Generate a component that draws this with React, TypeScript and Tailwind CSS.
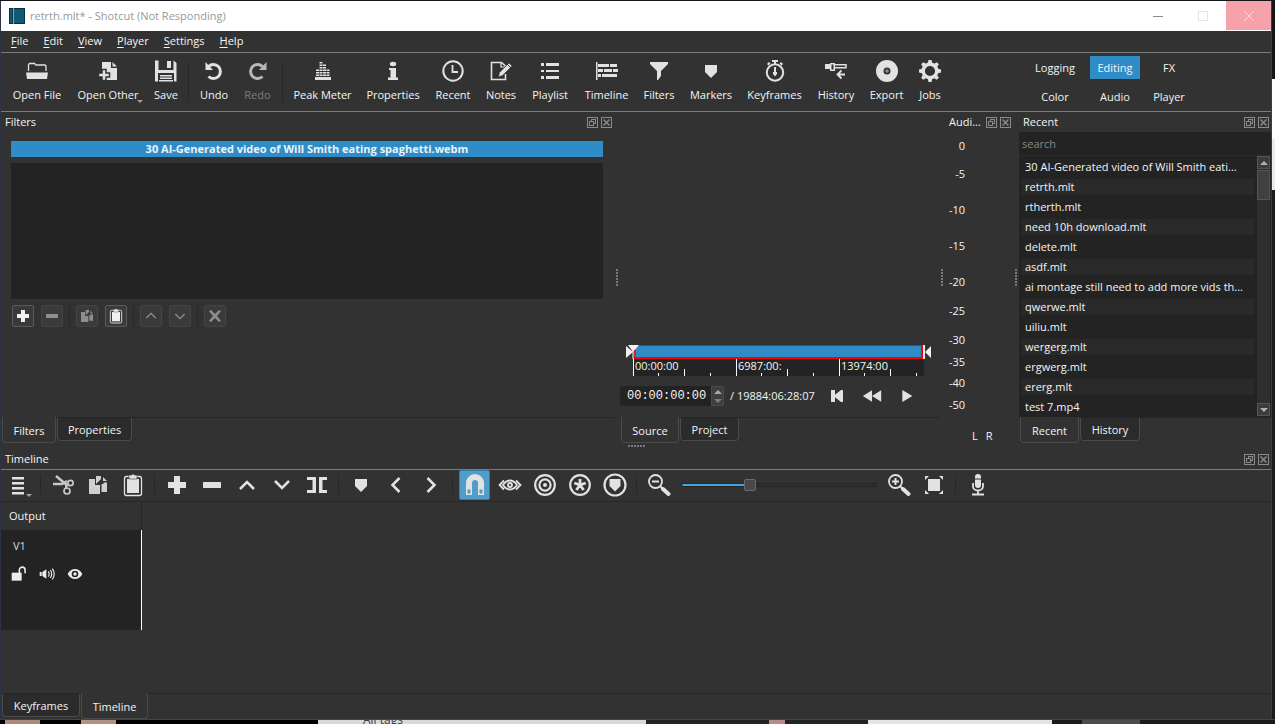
import React, { useState } from "react";

type IconProps = { children: React.ReactNode; size?: string };

const Icon = ({ children, size = "h-6 w-6" }: IconProps) => (
    <svg viewBox="0 0 24 24" className={`${size} shrink-0`} fill="currentColor" stroke="none" aria-hidden="true">
        {children}
    </svg>
);

/* ---------- shared icon shapes ---------- */

const plus = <path d="M9 3h6v6h6v6h-6v6H9v-6H3V9h6z" />;
const minus = <rect x="3" y="9" width="18" height="6" rx="0.5" />;
const marker = <path d="M6 6h12v7l-6 6-6-6z" />;
const copy = (
    <>
        <path d="M3 6h6v6h5v9H3z" />
        <path d="M10 3h5v3l-5 5z" />
        <path d="M15.500 11h2V9.500H21V19h-5.500z" />
        <path d="M17 4l4 4h-4z" />
    </>
);
const paste = (
    <>
        <rect x="3.500" y="3.500" width="17" height="19" rx="2" fill="none" stroke="currentColor" strokeWidth="1.300" />
        <path d="M6 6h12v14H6z" />
        <path d="M8 2h3V1h2v1h3v4H8z" stroke="#323232" strokeWidth="0.600" />
    </>
);
const up = <path d="M5 16l7-7 7 7" fill="none" stroke="currentColor" strokeWidth="2.500" />;
const down = <path d="M5 8l7 7 7-7" fill="none" stroke="currentColor" strokeWidth="2.500" />;

/* ---------- main toolbar ---------- */

type Tool = { label: string; width: string; icon: React.ReactNode; disabled?: boolean; arrow?: boolean };

const fileTools: Tool[] = [
    {
        label: "Open File",
        width: "w-16",
        icon: (
            <>
                <path d="M3.500 12V6l1-1.500h5L11 6h9l1 1v5" fill="none" stroke="currentColor" strokeWidth="1.300" />
                <path d="M1 13.500h22l-1 6.500H2z" />
            </>
        ),
    },
    {
        label: "Open Other",
        width: "w-[78px]",
        arrow: true,
        icon: (
            <>
                <path d="M6 3h9v6h6v12H6z" />
                <path d="M16.500 3v4.500H21z" />
                <path d="M6 10.500h4V14h3.500v4H10v3.500H6V18H2.500v-4H6z" stroke="#323232" strokeWidth="1.500" />
            </>
        ),
    },
    {
        label: "Save",
        width: "w-[38px]",
        icon: (
            <>
                <path d="M1 1.500h3.500V11h15V1.500l3 2.500v18.500H20V14H4v8.500H1z" />
                <path d="M13 2h4v7h-4z" />
                <path d="M6 16h12v1.500H6zM6 18.500h12V20H6zM5 21h14v1.500H5z" />
            </>
        ),
    },
];

const editTools: Tool[] = [
    {
        label: "Undo",
        width: "w-11",
        icon: (
            <>
                <path d="M6.500 7.500A7 7 0 1 1 6.500 17.500" fill="none" stroke="currentColor" strokeWidth="3" />
                <path d="M3.500 3v8H11z" />
            </>
        ),
    },
    {
        label: "Redo",
        width: "w-[43px]",
        disabled: true,
        icon: (
            <>
                <path d="M16.500 7.500A7 7 0 1 0 16.500 17.500" fill="none" stroke="#b8b8b8" strokeWidth="3" />
                <path d="M20.500 3v8H13z" fill="#b8b8b8" />
            </>
        ),
    },
];

const meterBars = [
    [5, 3],
    [8.5, 6],
    [12, 5],
    [15.5, 3],
];

const panelTools: Tool[] = [
    {
        label: "Peak Meter",
        width: "w-[73px]",
        icon: (
            <>
                <rect x="4" y="18" width="16" height="3" />
                {meterBars.map(([x, n]) =>
                    Array.from({ length: n }, (_, i) => <rect key={`${x}-${i}`} x={x} y={15.5 - i * 2.5} width="3" height="1.500" />),
                )}
            </>
        ),
    },
    {
        label: "Properties",
        width: "w-[68px]",
        icon: (
            <>
                <ellipse cx="12" cy="5" rx="3.200" ry="2.200" />
                <path d="M8 9h7v9.500h2V21H7v-2.500h2.500V11H8z" />
            </>
        ),
    },
    {
        label: "Recent",
        width: "w-[52px]",
        icon: (
            <>
                <circle cx="12" cy="12" r="9.700" fill="none" stroke="currentColor" strokeWidth="2" />
                <path d="M11.500 6v7H17" fill="none" stroke="currentColor" strokeWidth="1.800" />
            </>
        ),
    },
    {
        label: "Notes",
        width: "w-11",
        icon: (
            <>
                <path d="M16.500 7L12.500 3.500H2.500v17h14V15" fill="none" stroke="currentColor" strokeWidth="1.600" />
                <path d="M12 4v4h4" fill="none" stroke="currentColor" strokeWidth="1.200" />
                <path d="M20 4l3 3-9.500 9.500L9.500 18l1-4.500z" stroke="#323232" strokeWidth="0.600" />
                <path d="M18 5l4 4" stroke="#323232" strokeWidth="1" />
            </>
        ),
    },
    { label: "Playlist", width: "w-[54px]", icon: <path d="M3 4h3v3H3zM8 4h13v3H8zM3 11h3v2H3zM8 11h13v2H8zM3 17h3v3H3zM8 17h13v3H8z" /> },
    {
        label: "Timeline",
        width: "w-[59px]",
        icon: <path d="M1 3h1.500v18H1zM3 5h11v3H3zM15 5h7v3h-7zM3 10h5v3H3zM9 10h8v3H9zM18 10h5v3h-5zM3 15h3v3H3zM7 15h15v3H7z" />,
    },
    { label: "Filters", width: "w-[46px]", icon: <path d="M3 3h18v2l-7 7v5l-3 4h-1v-9L3 5z" /> },
    { label: "Markers", width: "w-[58px]", icon: marker },
    {
        label: "Keyframes",
        width: "w-[69px]",
        icon: (
            <>
                <circle cx="12" cy="13.500" r="8.200" fill="none" stroke="currentColor" strokeWidth="2" />
                <path d="M9 1h6v2h-2v3h-2V3H9zM4 5l2-2 1.500 1.500-2 2zM20 5l-2-2-1.500 1.500 2 2z" />
                <path d="M11 8h2v5h1v2l-2 2.500-2-2.500v-2h1z" />
            </>
        ),
    },
    {
        label: "History",
        width: "w-[54px]",
        icon: (
            <>
                <path d="M1 5h5v5H1zM6 4h5v8H6z" />
                <path d="M7.500 5.500h2v5h-2z" fill="#323232" />
                <path d="M11 5.700h11v3H11" fill="none" stroke="currentColor" strokeWidth="1.500" />
                <path d="M21 15.500h-7M17.500 11.500l-4 4 4 4" fill="none" stroke="currentColor" strokeWidth="1.800" />
            </>
        ),
    },
    {
        label: "Export",
        width: "w-[47px]",
        icon: (
            <>
                <circle cx="12" cy="12" r="11" />
                <circle cx="12" cy="12" r="3.500" fill="#323232" />
                <circle cx="12" cy="12" r="1.800" fill="#8a8a8a" />
            </>
        ),
    },
    {
        label: "Jobs",
        width: "w-10",
        icon: (
            <>
                <circle cx="12" cy="12" r="6.800" fill="none" stroke="currentColor" strokeWidth="3.400" />
                {[0, 45, 90, 135, 180, 225, 270, 315].map((a) => (
                    <path key={a} d="M9.800 4l.7-3h3l.7 3z" transform={`rotate(${a} 12 12)`} />
                ))}
            </>
        ),
    },
];

const ToolButton = ({ tool }: { tool: Tool }) => (
    <button disabled={tool.disabled} className={`relative flex shrink-0 flex-col items-center gap-1 whitespace-nowrap ${tool.width}`}>
        <span className="text-[#e2e2e2]">
            <Icon>{tool.icon}</Icon>
        </span>
        <span className={`leading-4 ${tool.disabled ? "text-[#7d7d7d]" : ""}`}>{tool.label}</span>
        {tool.arrow && <span className="absolute right-1 bottom-0 border-x-3 border-t-3 border-x-transparent border-t-[#a0a0a0]" />}
    </button>
);

const ToolSeparator = () => <span className="mx-[3px] mt-[3px] h-10 w-px shrink-0 bg-[#282828]" />;

const layouts = ["Logging", "Editing", "FX", "Color", "Audio", "Player"];

const MainToolbar = () => {
    const [layout, setLayout] = useState("Editing");

    return (
        <div className="flex h-[59px] shrink-0 border-b border-[#7c7c7c] bg-[#323232] pl-1">
            <div className="flex items-start pt-[6px]">
                {fileTools.map((t) => (
                    <ToolButton key={t.label} tool={t} />
                ))}
                <ToolSeparator />
                {editTools.map((t) => (
                    <ToolButton key={t.label} tool={t} />
                ))}
                <ToolSeparator />
                {panelTools.map((t) => (
                    <ToolButton key={t.label} tool={t} />
                ))}
            </div>
            <div className="ml-[74px] grid grid-cols-[62px_50px_50px] content-start gap-x-1 gap-y-[6px] pt-[3px]">
                {layouts.map((name) => (
                    <button key={name} onClick={() => setLayout(name)} className={`h-[23px] ${layout === name ? "bg-[#308cc6]" : ""}`}>
                        {name}
                    </button>
                ))}
            </div>
        </div>
    );
};

/* ---------- dock parts ---------- */

const DockTitle = ({ title }: { title: string }) => (
    <div className="flex h-5 shrink-0 items-center gap-[3px] pr-[2px] pl-1">
        <h2 className="min-w-0 flex-1 whitespace-nowrap">{title}</h2>
        <button aria-label={`Float ${title}`}>
            <svg viewBox="0 0 11 11" className="h-[11px] w-[11px]" fill="none" stroke="#8a8a8a" shapeRendering="crispEdges">
                <rect x="0.500" y="0.500" width="10" height="10" />
                <path d="M4.500 4V2.500h4v4H7M2.500 4.500h4v4h-4z" />
            </svg>
        </button>
        <button aria-label={`Close ${title}`}>
            <svg viewBox="0 0 11 11" className="h-[11px] w-[11px]" fill="none" stroke="#8a8a8a">
                <rect x="0.500" y="0.500" width="10" height="10" />
                <path d="M2.500 2.500l6 6M8.500 2.500l-6 6" strokeWidth="1.500" />
            </svg>
        </button>
    </div>
);

type TabsProps = { tabs: { name: string; width: string }[]; initial: string };

const Tabs = ({ tabs, initial }: TabsProps) => {
    const [active, setActive] = useState(initial);

    return (
        <div role="tablist" className="flex h-[26px] shrink-0 items-start gap-px border-t border-[#262626] pl-px">
            {tabs.map((t) => (
                <button
                    key={t.name}
                    role="tab"
                    aria-selected={active === t.name}
                    onClick={() => setActive(t.name)}
                    className={`rounded-b-sm border-x border-b border-[#4a4a4a] ${t.width} ${active === t.name ? "-mt-px h-[26px] bg-[#323232] pt-[2px]" : "h-[23px] bg-[#2b2b2b] pt-px"}`}
                >
                    {t.name}
                </button>
            ))}
        </div>
    );
};

const SplitterV = () => (
    <div className="flex w-[6px] shrink-0 flex-col items-center justify-center gap-px">
        {[0, 1, 2, 3, 4, 5].map((i) => (
            <span key={i} className="h-[2px] w-[2px] bg-[#7a7a7a]" />
        ))}
    </div>
);

/* ---------- filters ---------- */

const chevronUp = <path d="M5 15l7-7 7 7" fill="none" stroke="currentColor" strokeWidth="2" />;
const chevronDown = <path d="M5 9l7 7 7-7" fill="none" stroke="currentColor" strokeWidth="2" />;

const filterButtons = [
    [
        { label: "Add a filter", icon: plus, on: true },
        { label: "Remove selected filter", icon: minus, on: false },
    ],
    [
        { label: "Copy filters", icon: copy, on: false },
        { label: "Paste filters", icon: paste, on: true },
    ],
    [
        { label: "Move filter up", icon: chevronUp, on: false },
        { label: "Move filter down", icon: chevronDown, on: false },
    ],
    [{ label: "Deselect", icon: <path d="M3 5l3-2 6 6 6-6 3 2-6 7 6 7-3 2-6-6-6 6-3-2 6-7z" />, on: false }],
];

const FiltersDock = () => (
    <section className="flex min-w-0 flex-1 flex-col">
        <DockTitle title="Filters" />
        <div className="mt-[9px] mr-[11px] ml-[10px] h-4 bg-[#308cc6] text-center leading-4 font-bold text-[#eaf3fa]">
            30 AI-Generated video of Will Smith eating spaghetti.webm
        </div>
        <div className="mt-[6px] mr-[11px] ml-[10px] h-[136px] bg-[#232323]" />
        <div className="mt-[6px] ml-[11px] flex">
            {filterButtons.map((group, g) => (
                <div key={g} className="flex items-center gap-[7px]">
                    {g > 0 && <span className="-mr-px ml-[6px] h-5 w-px bg-[#292929]" />}
                    {group.map((b) => (
                        <button
                            key={b.label}
                            aria-label={b.label}
                            disabled={!b.on}
                            className={`flex h-[22px] w-[22px] items-center justify-center rounded-xs border bg-[#3a3a3a] ${b.on ? "border-[#5a5a5a] text-[#f0f0f0]" : "border-[#444444] text-[#8e8e8e]"}`}
                        >
                            <Icon size="h-4 w-4">{b.icon}</Icon>
                        </button>
                    ))}
                </div>
            ))}
        </div>
        <div className="flex-1" />
        <Tabs
            initial="Filters"
            tabs={[
                { name: "Filters", width: "w-[54px]" },
                { name: "Properties", width: "w-[75px]" },
            ]}
        />
    </section>
);

/* ---------- player ---------- */

const PlayerDock = () => {
    const [time, setTime] = useState("00:00:00:00");

    return (
        <section className="flex w-[319px] shrink-0 flex-col">
            <div className="flex-1" />
            <div className="relative mr-[15px] ml-[13px]">
                <div className="h-[14px] border border-r-3 border-b-2 border-[#ff0000] bg-[#308cc6]" />
                <div className="flex h-[17px] overflow-hidden bg-[#232323] leading-[13px]">
                    {["00:00:00", "6987:00:", "13974:00"].map((t) => (
                        <div key={t} className="relative w-[103px] shrink-0 border-l border-white pl-px">
                            {t}
                            <svg viewBox="0 0 103 17" className="absolute top-0 left-0 h-[17px] w-[103px]" stroke="white" shapeRendering="crispEdges">
                                <path d="M24.500 14v3M50.500 10v7M76.500 14v3" />
                            </svg>
                        </div>
                    ))}
                </div>
                <svg viewBox="0 0 13 14" className="absolute top-0 -left-[7px] h-[14px] w-[13px]" fill="#f0f0f0">
                    <path d="M0 1l7 6-7 6z" />
                    <path d="M2 0h11L7 7z" />
                    <path d="M7 6v8" stroke="white" />
                    <path d="M9 5v9" stroke="#ff0000" strokeWidth="1.500" />
                </svg>
                <svg viewBox="0 0 9 14" className="absolute top-0 -right-2 h-[14px] w-[9px]" fill="#f0f0f0">
                    <path d="M0 0h2v14H0zM8 1v12L2 7z" />
                </svg>
            </div>
            <div className="mt-[10px] mb-[11px] flex h-5 items-center">
                <div className="flex h-5 w-[104px] shrink-0 overflow-hidden rounded-xs bg-[#232323]">
                    <input
                        aria-label="Current position"
                        value={time}
                        onChange={(e) => setTime(e.target.value)}
                        className="w-[91px] bg-transparent pl-[7px] font-['Liberation_Mono',monospace] text-[12px] outline-none"
                    />
                    <div className="flex w-[13px] flex-col border border-[#4a4a4a] bg-[#3e3e3e]">
                        <button aria-label="Step forward" className="flex flex-1 items-center justify-center">
                            <span className="border-x-4 border-b-4 border-x-transparent border-b-[#a8a8a8]" />
                        </button>
                        <button aria-label="Step back" className="flex flex-1 items-center justify-center">
                            <span className="border-x-4 border-t-4 border-x-transparent border-t-[#7d7d7d]" />
                        </button>
                    </div>
                </div>
                <span className="w-24 shrink-0 pl-[6px] whitespace-nowrap">/ 19884:06:28:07</span>
                <button aria-label="Skip previous" className="flex w-[34px] justify-center text-[#e2e2e2]">
                    <Icon size="h-4 w-4">
                        <path d="M3 3h6v7l9-7h3v18h-3l-9-7v7H3z" />
                    </Icon>
                </button>
                <button aria-label="Rewind" className="flex w-[35px] justify-center text-[#e2e2e2]">
                    <Icon size="h-5 w-5">
                        <path d="M1 12l11-7v14zM12 12l11-7v14z" />
                    </Icon>
                </button>
                <button aria-label="Play" className="flex w-[35px] justify-center text-[#e2e2e2]">
                    <Icon size="h-4 w-4">
                        <path d="M5 3l15 9-15 9z" />
                    </Icon>
                </button>
            </div>
            <Tabs
                initial="Source"
                tabs={[
                    { name: "Source", width: "w-[58px]" },
                    { name: "Project", width: "w-[59px]" },
                ]}
            />
        </section>
    );
};

/* ---------- audio peak meter ---------- */

const levels = [
    { db: "0", step: "h-7" },
    { db: "-5", step: "h-9" },
    { db: "-10", step: "h-9" },
    { db: "-15", step: "h-9" },
    { db: "-20", step: "h-[29px]" },
    { db: "-25", step: "h-[29px]" },
    { db: "-30", step: "h-[22px]" },
    { db: "-35", step: "h-[21px]" },
    { db: "-40", step: "h-[22px]" },
    { db: "-50", step: "h-8" },
];

const AudioDock = () => (
    <section className="flex w-[68px] shrink-0 flex-col">
        <DockTitle title="Audi..." />
        <div className="mt-[6px] w-5 text-right leading-4">
            {levels.map((l) => (
                <div key={l.db} className={l.step}>
                    {l.db}
                </div>
            ))}
        </div>
        <div className="flex h-[14px] items-center gap-2 pl-[27px]">
            <span>L</span>
            <span>R</span>
        </div>
    </section>
);

/* ---------- recent ---------- */

const recent = [
    "30 AI-Generated video of Will Smith eati...",
    "retrth.mlt",
    "rtherth.mlt",
    "need 10h download.mlt",
    "delete.mlt",
    "asdf.mlt",
    "ai montage still need to add more vids th...",
    "qwerwe.mlt",
    "uiliu.mlt",
    "wergerg.mlt",
    "ergwerg.mlt",
    "ererg.mlt",
    "test 7.mp4",
];

const RecentDock = () => (
    <section className="flex w-[252px] shrink-0 flex-col">
        <DockTitle title="Recent" />
        <input
            aria-label="Search recent files"
            placeholder="search"
            className="h-[23px] rounded-xs bg-[#232323] px-[3px] outline-none placeholder:text-[#888888]"
        />
        <div className="flex border-t border-[#2b2b2b] bg-[#232323]">
            <ul className="min-w-0 flex-1 pt-px pr-[3px] pl-[3px]">
                {recent.map((name, i) => (
                    <li key={name} className="flex h-5 items-center">
                        <span className={`w-full pl-[3px] leading-4 whitespace-nowrap ${i % 2 ? "bg-[#2a2a2a]" : ""}`}>{name}</span>
                    </li>
                ))}
            </ul>
            <div className="mr-px mb-px flex w-[13px] flex-col bg-[#2e2e2e]">
                <button aria-label="Scroll up" className="flex h-[13px] items-center justify-center border border-[#555555] bg-[#3c3c3c]">
                    <span className="border-x-4 border-b-4 border-x-transparent border-b-[#b0b0b0]" />
                </button>
                <span className="mt-px h-[30px] border border-[#555555] bg-[#404040]" />
                <span className="flex-1" />
                <button aria-label="Scroll down" className="flex h-[13px] items-center justify-center border border-[#555555] bg-[#3c3c3c]">
                    <span className="border-x-4 border-t-4 border-x-transparent border-t-[#b0b0b0]" />
                </button>
            </div>
        </div>
        <Tabs
            initial="Recent"
            tabs={[
                { name: "Recent", width: "w-[59px]" },
                { name: "History", width: "w-[60px]" },
            ]}
        />
    </section>
);

/* ---------- timeline ---------- */

const timelineGroups = [
    [
        {
            label: "Cut",
            icon: (
                <g fill="none" stroke="#c8c8c8">
                    <path d="M5 3l12 10M2 11h9l5-3" strokeWidth="2.500" />
                    <circle cx="19.500" cy="10" r="2.600" strokeWidth="1.700" />
                    <circle cx="16" cy="18" r="3" strokeWidth="1.700" />
                    <path d="M15 11v4" strokeWidth="2" />
                </g>
            ),
        },
        { label: "Copy", icon: <g fill="#cfcfcf">{copy}</g> },
        { label: "Paste", icon: paste },
    ],
    [
        { label: "Append", icon: plus },
        { label: "Ripple delete", icon: minus },
        { label: "Lift", icon: up },
        { label: "Overwrite", icon: down },
        { label: "Split at playhead", icon: <path d="M2 4h9v16H2v-3h5.500V7H2zM22 4h-8v16h8v-3h-4.500V7H22z" /> },
    ],
    [
        { label: "Create marker", icon: marker },
        { label: "Previous marker", icon: <path d="M15.500 5l-7 7 7 7" fill="none" stroke="currentColor" strokeWidth="2.500" /> },
        { label: "Next marker", icon: <path d="M8.500 5l7 7-7 7" fill="none" stroke="currentColor" strokeWidth="2.500" /> },
    ],
    [
        {
            label: "Snap",
            icon: (
                <>
                    <path d="M3 22V10a9 9 0 0 1 18 0v12h-6V10a3 3 0 0 0-6 0v12z" />
                    <path d="M4.500 16.500h3v4h-3zM16.500 16.500h3v4h-3z" fill="#519dca" />
                </>
            ),
        },
        {
            label: "Scrub while dragging",
            icon: (
                <g fill="none" stroke="currentColor" strokeWidth="1.800">
                    <path d="M6 7.500L1.500 12 6 16.500M18 7.500l4.500 4.500-4.500 4.500" />
                    <path d="M5 12c4-6 10-6 14 0-4 6-10 6-14 0z" />
                    <circle cx="12" cy="12" r="2" />
                </g>
            ),
        },
        {
            label: "Ripple",
            icon: (
                <g fill="none" stroke="currentColor" strokeWidth="2.200">
                    <circle cx="12" cy="12" r="9.800" />
                    <circle cx="12" cy="12" r="5.600" />
                    <circle cx="12" cy="12" r="2" fill="currentColor" stroke="none" />
                </g>
            ),
        },
        {
            label: "Ripple all tracks",
            icon: (
                <g fill="none" stroke="currentColor" strokeWidth="2.200">
                    <circle cx="12" cy="12" r="9.800" />
                    <path d="M12 12V6M12 12l5.700-2M12 12l3.600 5M12 12l-3.600 5M12 12L6.300 10" strokeWidth="2.800" />
                </g>
            ),
        },
        {
            label: "Ripple markers",
            icon: (
                <>
                    <circle cx="12" cy="12" r="10.500" fill="none" stroke="currentColor" strokeWidth="2.200" />
                    <path d="M6.500 6h11v7L12 18.500 6.500 13z" />
                </>
            ),
        },
    ],
];

const magnifier = (
    <>
        <circle cx="8.500" cy="8.500" r="6.500" fill="none" stroke="currentColor" strokeWidth="1.800" />
        <path d="M13 13l3 3" stroke="currentColor" strokeWidth="2" />
        <path d="M16 16l5.500 5" stroke="currentColor" strokeWidth="4" strokeLinecap="round" />
    </>
);

const TimelineSeparator = () => <span className="mx-1 h-5 w-px shrink-0 bg-[#282828]" />;

const TimelineButton = ({ label, children }: { label: string; children: React.ReactNode }) => (
    <button aria-label={label} className="flex w-[35px] shrink-0 justify-center">
        {label === "Snap" ? (
            <span className="flex h-[30px] w-[31px] items-center justify-center rounded-xs border border-[#2f78a8] bg-[#519dca]">
                <Icon>{children}</Icon>
            </span>
        ) : (
            <Icon>{children}</Icon>
        )}
    </button>
);

const TimelineToolbar = () => {
    const [zoom, setZoom] = useState(34);

    return (
        <div className="flex h-[33px] shrink-0 items-center border-t border-b border-t-[#7c7c7c] border-b-[#262626] pb-px text-[#e2e2e2]">
            <button aria-label="Timeline menu" className="relative flex w-[35px] shrink-0 justify-center">
                <Icon>
                    <path d="M5 4h12v2.500H5zM5 9h12v2.500H5zM5 14h12v2.500H5zM5 19h12v2.500H5z" />
                </Icon>
                <span className="absolute right-1 bottom-0 border-x-3 border-t-3 border-x-transparent border-t-[#a0a0a0]" />
            </button>
            {timelineGroups.map((group, i) => (
                <React.Fragment key={i}>
                    <TimelineSeparator />
                    {group.map((b) => (
                        <TimelineButton key={b.label} label={b.label}>
                            {b.icon}
                        </TimelineButton>
                    ))}
                </React.Fragment>
            ))}
            <TimelineSeparator />
            <TimelineButton label="Zoom out">
                {magnifier}
                <path d="M5 7.500h7v2H5z" />
            </TimelineButton>
            <input
                type="range"
                aria-label="Timeline zoom"
                value={zoom}
                onChange={(e) => setZoom(Number(e.target.value))}
                className="mr-1 ml-[5px] h-1 w-[196px] shrink-0 appearance-none rounded-xs border border-[#262626] outline-none [&::-webkit-slider-thumb]:h-3 [&::-webkit-slider-thumb]:w-3 [&::-webkit-slider-thumb]:appearance-none [&::-webkit-slider-thumb]:rounded-xs [&::-webkit-slider-thumb]:border [&::-webkit-slider-thumb]:border-[#6a6a6a] [&::-webkit-slider-thumb]:bg-[#484848]"
                style={{ background: `linear-gradient(to right, #45a5e0 ${zoom}%, #2e2e2e ${zoom}%)` }}
            />
            <TimelineButton label="Zoom in">
                {magnifier}
                <path d="M5 7.500h2.500V5h2v2.500H12v2H9.500V12h-2V9.500H5z" />
            </TimelineButton>
            <TimelineButton label="Zoom to fit">
                <path d="M6 6h12v12H6zM3 3h4L3 7zM21 3v4l-4-4zM3 21v-4l4 4zM21 21h-4l4-4z" />
            </TimelineButton>
            <TimelineSeparator />
            <TimelineButton label="Record audio">
                <rect x="9" y="1" width="6" height="14" rx="3" />
                <path d="M9 6h6" stroke="#323232" strokeWidth="1" />
                <path d="M7 10v3.500a5 4 0 0 0 10 0V10M12 18v4M6 21.500h12" fill="none" stroke="currentColor" strokeWidth="1.800" />
            </TimelineButton>
        </div>
    );
};

const TrackHead = () => (
    <div className="h-[100px] border-r border-white bg-[#232323] pt-2 pl-3">
        <div className="leading-4 text-[#d8d8d8]">V1</div>
        <div className="mt-3 -ml-[2px] flex gap-3 text-[#ececec]">
            <button aria-label="Lock track">
                <Icon size="h-4 w-4">
                    <path d="M1 10h15v12H1z" />
                    <path d="M12.500 11V6a4.300 4.300 0 0 1 8.600 0v5" fill="none" stroke="currentColor" strokeWidth="2.400" />
                </Icon>
            </button>
            <button aria-label="Mute">
                <Icon size="h-4 w-4">
                    <path d="M1 9h3v6H1zM5 9l6-4v14l-6-4z" />
                    <path d="M14 8q2.500 4 0 8M17 6q4 6 0 12M20 4q5.500 8 0 16" fill="none" stroke="currentColor" strokeWidth="1.700" />
                </Icon>
            </button>
            <button aria-label="Hide">
                <Icon size="h-4 w-4">
                    <path fillRule="evenodd" d="M1 12C6 2 18 2 23 12 18 22 6 22 1 12zM12 7a5 5 0 1 0 0 10 5 5 0 0 0 0-10z" />
                    <circle cx="12" cy="12" r="2.500" />
                </Icon>
            </button>
        </div>
    </div>
);

const TimelineDock = () => (
    <section className="flex flex-1 flex-col">
        <DockTitle title="Timeline" />
        <TimelineToolbar />
        <div className="w-[141px]">
            <div className="flex h-7 items-center border-r border-[#262626] pl-2">Output</div>
            <TrackHead />
        </div>
        <div className="flex-1" />
        <Tabs
            initial="Timeline"
            tabs={[
                { name: "Keyframes", width: "w-[78px]" },
                { name: "Timeline", width: "w-[67px]" },
            ]}
        />
    </section>
);

/* ---------- window ---------- */

const TitleBar = () => (
    <header className="flex h-[30px] shrink-0 items-center bg-white pl-2 text-[#999999]">
        <svg viewBox="0 0 16 16" className="h-4 w-4" aria-hidden="true">
            <rect width="16" height="16" fill="#115a75" />
            <path d="M0 0h16v1H0zM0 15h16v1H0zM0 0h1v16H0zM15 0h1v16h-1z" fill="#0c2f3c" />
            <path d="M3 0h1v16H3z" fill="#0c2f3c" />
            <path d="M4 0h1v16H4z" fill="#8ea6ae" />
        </svg>
        <h1 className="ml-[5px] flex-1">retrth.mlt* - Shotcut (Not Responding)</h1>
        <button aria-label="Minimize" className="flex h-full w-[45px] items-center justify-center">
            <span className="h-px w-[10px] bg-[#8c8c8c]" />
        </button>
        <button aria-label="Maximize" disabled className="flex h-full w-[46px] items-center justify-center">
            <span className="h-[10px] w-[10px] border border-[#e6e6e6]" />
        </button>
        <button aria-label="Close" className="flex h-[29px] w-[45px] items-center justify-center self-start bg-[#f7a1a8]">
            <svg viewBox="0 0 10 10" className="h-[10px] w-[10px]" stroke="#fbdcdf">
                <path d="M0 0l10 10M10 0L0 10" />
            </svg>
        </button>
    </header>
);

const menus = ["File", "Edit", "View", "Player", "Settings", "Help"];

const MenuBar = () => (
    <nav className="flex h-[22px] shrink-0 items-center gap-[15px] border-b border-[#7c7c7c] pb-px pl-[10px]">
        {menus.map((m) => (
            <button key={m}>
                <span className="underline underline-offset-2">{m[0]}</span>
                {m.slice(1)}
            </button>
        ))}
    </nav>
);

export default function App() {
    return (
        <div className="flex min-h-screen flex-col bg-[#15161a] pt-px font-['Open_Sans','Noto_Sans',sans-serif] text-[11px] leading-4 text-[#f4f4f4]">
            <div className="flex flex-1">
                <div className="w-px bg-[#2b3345]" />
                <main className="flex min-w-0 flex-1 flex-col bg-[#323232]">
                    <TitleBar />
                    <MenuBar />
                    <MainToolbar />
                    <div className="flex shrink-0">
                        <FiltersDock />
                        <SplitterV />
                        <PlayerDock />
                        <SplitterV />
                        <AudioDock />
                        <SplitterV />
                        <RecentDock />
                    </div>
                    <div className="flex h-[6px] shrink-0 items-center justify-center gap-px">
                        {[0, 1, 2, 3, 4, 5].map((i) => (
                            <span key={i} className="h-[2px] w-[2px] bg-[#7a7a7a]" />
                        ))}
                    </div>
                    <TimelineDock />
                </main>
                {/* what shows of the desktop beside the window */}
                <div className="flex w-1 flex-col border-l border-[#3c3c3c]">
                    <div className="h-[78px] bg-[#15161a]" />
                    <div className="h-[60px] bg-white" />
                    <div className="h-[51px] bg-[#ececec]" />
                    <div className="flex-1 bg-[#1b1b1b]" />
                </div>
            </div>
            <div className="flex h-[5px] shrink-0 overflow-hidden border-t border-[#444444]">
                <div className="flex w-[318px] gap-[41px] bg-black pl-[5px]">
                    <span className="w-[35px] bg-[#a98a7b]" />
                    <span className="w-[35px] bg-[#b29383]" />
                </div>
                <div className="w-[328px] bg-[#d9d9d9] pl-[45px] text-[12px] text-[#3c4043]">
                    <span className="-mt-2 block leading-4">All tags</span>
                </div>
                <div className="flex w-[222px] justify-center bg-[#232323]">
                    <span className="ml-10 w-4 bg-[#b98a8a]" />
                </div>
                <div className="w-[184px] bg-[#e4e4e4]" />
                <div className="flex-1 bg-[#1b1b1b] pl-[30px]">
                    <span className="block h-full w-[58px] bg-[#4c4c4c]" />
                </div>
            </div>
        </div>
    );
}
